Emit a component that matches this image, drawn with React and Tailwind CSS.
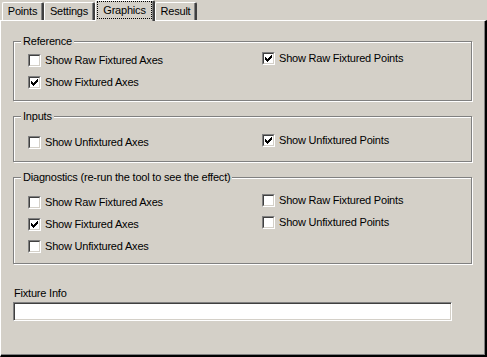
import React from 'react';

const CHECK = [
  '......X',
  '.....XX',
  'X...XXX',
  'XX.XXX.',
  'XXXXX..',
  '.XXX...',
  '..X....',
];

function CheckMark() {
  return (
    <svg width="7" height="7" viewBox="0 0 7 7" shapeRendering="crispEdges">
      {CHECK.map((row, y) =>
        row.split('').map((c, x) =>
          c === 'X' ? <rect key={`${x}-${y}`} x={x} y={y} width="1" height="1" fill="#000" /> : null
        )
      )}
    </svg>
  );
}

function Checkbox({ label, checked }) {
  return (
    <div className="flex items-center h-[13px] gap-[4px] whitespace-nowrap">
      <span className="w-[13px] h-[13px] shrink-0 border border-t-[#808080] border-l-[#808080] border-b-white border-r-white">
        <span className="flex items-center justify-center w-[11px] h-[11px] bg-white border border-t-[#404040] border-l-[#404040] border-b-[#d4d0c8] border-r-[#d4d0c8]">
          {checked && <CheckMark />}
        </span>
      </span>
      <span className="leading-[13px]">{label}</span>
    </div>
  );
}

function Group({ title, className, left, right }) {
  return (
    <div className={`relative w-[459px] border border-[#808080] shadow-[inset_1px_1px_0_#fff,1px_1px_0_#fff] ${className}`}>
      <span className="absolute left-[7px] top-[-7px] px-[2px] leading-[13px] bg-[#d4d0c8] whitespace-nowrap">
        {title}
      </span>
      <div className="grid grid-cols-[234px_1fr] pl-[14px]">
        <div className="flex flex-col gap-[9px]">
          {left.map((c) => (
            <Checkbox key={c.label} {...c} />
          ))}
        </div>
        <div className="flex flex-col gap-[9px] -mt-[2px]">
          {right.map((c) => (
            <Checkbox key={c.label} {...c} />
          ))}
        </div>
      </div>
    </div>
  );
}

function Tab({ label, width, selected }) {
  if (selected) {
    return (
      <div
        className={`relative z-10 flex h-[21px] -mb-[1px] ${width} bg-[#d4d0c8] rounded-t-[2px] border-t border-l border-t-white border-l-white border-r-2 border-r-[#404040] shadow-[inset_-1px_0_0_#808080]`}
      >
        <div className="flex-1 mx-[1px] mt-[0px] mb-[2px] flex items-center justify-center border border-dotted border-black leading-[13px]">
          {label}
        </div>
      </div>
    );
  }
  return (
    <div
      className={`flex items-start justify-center pt-[2px] h-[18px] ${width} bg-[#d4d0c8] rounded-t-[2px] border-t border-l border-t-white border-l-white border-r-2 border-r-[#404040] shadow-[inset_-1px_0_0_#808080] leading-[13px]`}
    >
      {label}
    </div>
  );
}

export default function App() {
  return (
    <div
      className="w-[487px] h-[357px] bg-[#d4d0c8] text-black text-[11px] tracking-[-0.2px] overflow-hidden"
      style={{ fontFamily: '"Liberation Sans", Arial, sans-serif' }}
    >
      {/* Tab strip */}
      <div className="flex items-end h-[20px] pl-[2px]">
        <Tab label="Points" width="w-[42px]" />
        <Tab label="Settings" width="w-[51px]" />
        <Tab label="Graphics" width="w-[60px]" selected />
        <Tab label="Result" width="w-[42px]" />
      </div>

      {/* Tab page */}
      <div className="h-[337px] border-t border-l border-t-white border-l-white border-r-2 border-b-2 border-r-[#000] border-b-[#000] shadow-[inset_-1px_-1px_0_#808080] pl-[12px]">
        <Group
          title="Reference"
          className="mt-[20px] pt-[12px] pb-[11px]"
          left={[
            { label: 'Show Raw Fixtured Axes' },
            { label: 'Show Fixtured Axes', checked: true },
          ]}
          right={[{ label: 'Show Raw Fixtured Points', checked: true }]}
        />
        <Group
          title="Inputs"
          className="mt-[15px] pt-[19px] pb-[12px]"
          left={[{ label: 'Show Unfixtured Axes' }]}
          right={[{ label: 'Show Unfixtured Points', checked: true }]}
        />
        <Group
          title="Diagnostics (re-run the tool to see the effect)"
          className="mt-[15px] pt-[18px] pb-[10px]"
          left={[
            { label: 'Show Raw Fixtured Axes' },
            { label: 'Show Fixtured Axes', checked: true },
            { label: 'Show Unfixtured Axes' },
          ]}
          right={[
            { label: 'Show Raw Fixtured Points' },
            { label: 'Show Unfixtured Points' },
          ]}
        />

        <div className="mt-[23px] leading-[13px] pl-[1px]">Fixture Info</div>
        <div className="mt-[2px] w-[439px] h-[19px] bg-white border border-t-[#808080] border-l-[#808080] border-b-white border-r-white shadow-[inset_1px_1px_0_#404040,inset_-1px_-1px_0_#d4d0c8]" />
      </div>
    </div>
  );
}
